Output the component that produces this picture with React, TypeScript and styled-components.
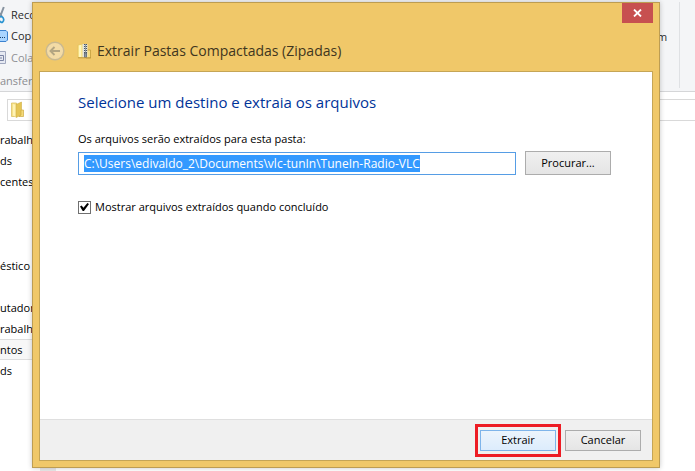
import React, { useEffect, useRef } from "react";
import styled, { createGlobalStyle } from "styled-components";

const GlobalStyle = createGlobalStyle`
  * { box-sizing: border-box; }
  body {
    margin: 0;
    background: #fff;
    color: #000;
    font: 11px/21px "Open Sans", "Noto Sans", sans-serif;
  }
  button, input { font: inherit; color: inherit; }
`;

const Desktop = styled.div`
  position: relative;
  display: flex;
  flex-direction: column;
  height: 100vh;
  overflow: hidden;
`;

const Ribbon = styled.div`
  display: flex;
  justify-content: space-between;
  height: 92px;
  padding-top: 2px;
  background: #f4f5f7;
  border-bottom: 1px solid #d5d6d8;
`;

const ClipboardGroup = styled.div`
  display: flex;
  flex-direction: column;
  padding-top: 2px;
`;

const RibbonItem = styled.div<{ $dim?: boolean }>`
  display: flex;
  align-items: center;
  gap: 3px;
  height: 22px;
  white-space: nowrap;
  color: ${(p) => (p.$dim ? "#8f9094" : "#2b2b2b")};
  svg { flex: none; }
`;

const GroupName = styled.div`
  padding-top: 2px;
  color: #8b8c90;
  white-space: nowrap;
`;

const SelectGroup = styled.div`
  width: 23px;
  height: 86px;
  padding-top: 24px;
  margin-right: 15px;
  border-right: 1px solid #dfe1e4;
  color: #2b2b2b;
`;

const AddressRow = styled.div`
  padding: 7px 0 0 7px;
`;

const AddressBox = styled.div`
  display: flex;
  align-items: center;
  height: 22px;
  padding-left: 2px;
  border: 1px solid #d9d9d9;
  border-right: 0;
`;

const NavTree = styled.ul`
  flex: 1;
  margin: 0;
  padding: 8px 0 0;
  list-style: none;
`;

const NavItem = styled.li<{ $selected?: boolean }>`
  width: 45px;
  height: 21px;
  line-height: ${(p) => (p.$selected ? "19px" : "21px")};
  white-space: nowrap;
  background: ${(p) => (p.$selected ? "#f7f7f7" : "transparent")};
  border: solid ${(p) => (p.$selected ? "#dedede" : "transparent")};
  border-width: ${(p) => (p.$selected ? "1px 0" : "0")};
`;

const ScrollHint = styled.div`
  width: 16px;
  height: 3px;
  margin-left: 40px;
  background: #e9e9e9;
`;

const Dialog = styled.section`
  position: absolute;
  inset: 2px 35px 3px 32px;
  display: flex;
  flex-direction: column;
  padding: 0 6px 6px;
  background: #f0c869;
  border: 1px solid #bd9d52;
  box-shadow: 0 0 5px rgba(0, 0, 0, 0.22);
`;

const CloseButton = styled.button`
  display: flex;
  align-items: center;
  justify-content: center;
  align-self: flex-end;
  width: 31px;
  height: 20px;
  padding: 0;
  border: 0;
  background: #c75050;
`;

const TitleBar = styled.header`
  display: flex;
  align-items: center;
  height: 48px;
  padding: 7px 0 0 6px;
`;

const BackButton = styled.button`
  display: flex;
  padding: 0;
  border: 0;
  background: none;
`;

const Title = styled.h1`
  display: flex;
  align-items: center;
  gap: 4px;
  margin: 0 0 0 12px;
  font-size: 14px;
  line-height: 20px;
  font-weight: 400;
  color: #3f3620;
  white-space: nowrap;
`;

const Body = styled.div`
  flex: 1;
  display: flex;
  flex-direction: column;
  background: #fff;
  border: 1px solid #c5a556;
`;

const Content = styled.div`
  flex: 1;
  padding: 19px 41px 0 38px;
`;

const Heading = styled.h2`
  margin: 0;
  font-size: 15px;
  line-height: 22px;
  font-weight: 400;
  color: #003399;
`;

const FieldLabel = styled.label`
  display: block;
  margin-top: 16px;
  line-height: 20px;
`;

const PathRow = styled.div`
  display: flex;
  align-items: flex-end;
  gap: 9px;
  margin-top: 2px;
`;

const PathInput = styled.input`
  flex: 1;
  min-width: 0;
  height: 23px;
  padding: 0 5px;
  border: 1px solid #569de5;
  outline: 0;
  background: #fff;
  font-size: 12px;
  line-height: 15px;
  &::selection { background: #3399ff; color: #fff; }
`;

const PushButton = styled.button<{ $primary?: boolean; $wide?: boolean }>`
  width: ${(p) => (p.$wide ? "86px" : "76px")};
  height: ${(p) => (p.$wide ? "24px" : "21px")};
  padding: 0;
  line-height: 18px;
  border: 1px solid ${(p) => (p.$primary ? "#7eb4ea" : "#acacac")};
  background: ${(p) =>
    p.$primary
      ? "linear-gradient(#ecf4fc, #dcecfc)"
      : "linear-gradient(#f0f0f0, #e5e5e5)"};
`;

const CheckRow = styled.label`
  display: flex;
  align-items: center;
  gap: 4px;
  margin-top: 22px;
  line-height: 20px;
`;

const CheckBox = styled.input`
  appearance: none;
  flex: none;
  display: grid;
  place-items: center;
  width: 13px;
  height: 13px;
  margin: 0;
  border: 1px solid #707070;
  background: #fff;
  &:checked::before {
    content: "";
    width: 9px;
    height: 8px;
    background: #000;
    clip-path: polygon(0 45%, 18% 32%, 38% 58%, 82% 0, 100% 12%, 44% 100%, 30% 100%);
  }
`;

const Footer = styled.footer`
  display: flex;
  align-items: center;
  justify-content: flex-end;
  gap: 4px;
  height: 41px;
  padding-right: 11px;
  background: #f0f0f0;
  border-top: 1px solid #dfdfdf;
`;

const Highlight = styled.div`
  display: flex;
  padding: 3px 2px;
  border: 3px solid #ed1c24;
`;

const ZipFolderIcon = () => (
  <svg width="16" height="16" viewBox="0 0 16 16" aria-hidden="true">
    <path d="M1 2l5-1v13.500H1z" fill="#fbe88f" stroke="#e0c05c" strokeWidth=".6" />
    <path d="M2 2.500l2-.5v12H2z" fill="#fff6bd" />
    <path d="M10 7h3.500v8H9z" fill="#f8e085" stroke="#c39d3c" strokeWidth=".8" />
    <path d="M5.500 1h5v13.500h-5z" fill="#e4e4da" />
    <path d="M8.500 1v9" stroke="#4b5663" strokeWidth="3" strokeDasharray="1 1" />
    <path d="M8.500 1v9" stroke="#8d98a4" strokeWidth="1" />
    <path d="M7.500 10h2v4.500h-2z" fill="#8a96a3" stroke="#505c69" strokeWidth=".7" />
    <path d="M1 14.800h13" stroke="#bd9738" strokeWidth=".9" />
  </svg>
);

const FolderIcon = () => (
  <svg width="16" height="18" viewBox="0 0 16 18" aria-hidden="true">
    <path d="M1.500 2h5v13.500h-5z" fill="#f7e28a" stroke="#d9bc58" strokeWidth=".7" />
    <path d="M3 3l3 1v12l-3-1.500z" fill="#fff3b3" />
    <path d="M6 3.500L11.500 1v13L6 16.500z" fill="#e5c554" stroke="#cfae45" strokeWidth=".6" />
    <path d="M11 9h2.500v6.500H9l2-1.500z" fill="#f4da78" stroke="#cdaa44" strokeWidth=".7" />
  </svg>
);

export default function App() {
  const path = useRef<HTMLInputElement>(null);
  useEffect(() => {
    path.current?.focus();
    path.current?.select();
  }, []);

  return (
    <>
      <GlobalStyle />
      <Desktop>
        <Ribbon>
          <ClipboardGroup>
            <RibbonItem>
              <svg width="8" height="18" viewBox="0 0 8 18" aria-hidden="true">
                <path d="M3.800 1L0 11M0 7l1.800 4" stroke="#8793a0" strokeWidth="2" />
                <path d="M0 11l1.500-.5c2.500 1 2.800 4 1.200 5.500C1.500 17 .5 16 0 15" fill="none" stroke="#2993d1" strokeWidth="1.700" />
              </svg>
              Reco
            </RibbonItem>
            <RibbonItem>
              <svg width="8" height="12" viewBox="0 0 8 12" aria-hidden="true">
                <path d="M0 .5h6l1.500 1.500v8L6 11.500H0" fill="#a9d4ff" stroke="#3b82d0" />
                <path d="M0 7.500h6" stroke="#173f6b" strokeDasharray="1 1" />
              </svg>
              Cop
            </RibbonItem>
            <RibbonItem $dim>
              <svg width="8" height="16" viewBox="0 0 8 16" aria-hidden="true">
                <path d="M0 2.500h5.500v12H0" fill="#e6e9f2" stroke="#a0a8bf" />
                <path d="M0 6.500h3.500v5H0M0 9h2" fill="none" stroke="#7983a3" />
              </svg>
              Cola
            </RibbonItem>
            <GroupName>ansferê</GroupName>
          </ClipboardGroup>
          <SelectGroup>m</SelectGroup>
        </Ribbon>
        <AddressRow>
          <AddressBox>
            <FolderIcon />
          </AddressBox>
        </AddressRow>
        <NavTree>
          <NavItem>rabalh</NavItem>
          <NavItem>ds</NavItem>
          <NavItem>centes</NavItem>
          <NavItem />
          <NavItem />
          <NavItem />
          <NavItem>éstico</NavItem>
          <NavItem />
          <NavItem>utador</NavItem>
          <NavItem>rabalh</NavItem>
          <NavItem $selected>ntos</NavItem>
          <NavItem>ds</NavItem>
        </NavTree>
        <ScrollHint />

        <Dialog role="dialog" aria-labelledby="dialog-title">
          <CloseButton aria-label="Fechar">
            <svg width="9" height="8" viewBox="0 0 9 8" aria-hidden="true">
              <path d="M1 .5l7 7M8 .5l-7 7" stroke="#fff" strokeWidth="1.8" />
            </svg>
          </CloseButton>
          <TitleBar>
            <BackButton aria-label="Voltar" disabled>
              <svg width="20" height="20" viewBox="0 0 20 20" aria-hidden="true">
                <circle cx="10" cy="10" r="8.800" fill="#f3dba6" stroke="#c9b991" strokeWidth="1.500" />
                <path d="M15 10H6M9.500 6L5.500 10l4 4" fill="none" stroke="#b3a582" strokeWidth="1.900" />
              </svg>
            </BackButton>
            <Title id="dialog-title">
              <ZipFolderIcon />
              Extrair Pastas Compactadas (Zipadas)
            </Title>
          </TitleBar>
          <Body>
            <Content>
              <Heading>Selecione um destino e extraia os arquivos</Heading>
              <FieldLabel htmlFor="path">Os arquivos serão extraídos para esta pasta:</FieldLabel>
              <PathRow>
                <PathInput
                  id="path"
                  ref={path}
                  spellCheck={false}
                  defaultValue="C:\Users\edivaldo_2\Documents\vlc-tunIn\TuneIn-Radio-VLC"
                />
                <PushButton $wide>Procurar...</PushButton>
              </PathRow>
              <CheckRow>
                <CheckBox type="checkbox" defaultChecked />
                Mostrar arquivos extraídos quando concluído
              </CheckRow>
            </Content>
            <Footer>
              <Highlight>
                <PushButton $primary>Extrair</PushButton>
              </Highlight>
              <PushButton>Cancelar</PushButton>
            </Footer>
          </Body>
        </Dialog>
      </Desktop>
    </>
  );
}
